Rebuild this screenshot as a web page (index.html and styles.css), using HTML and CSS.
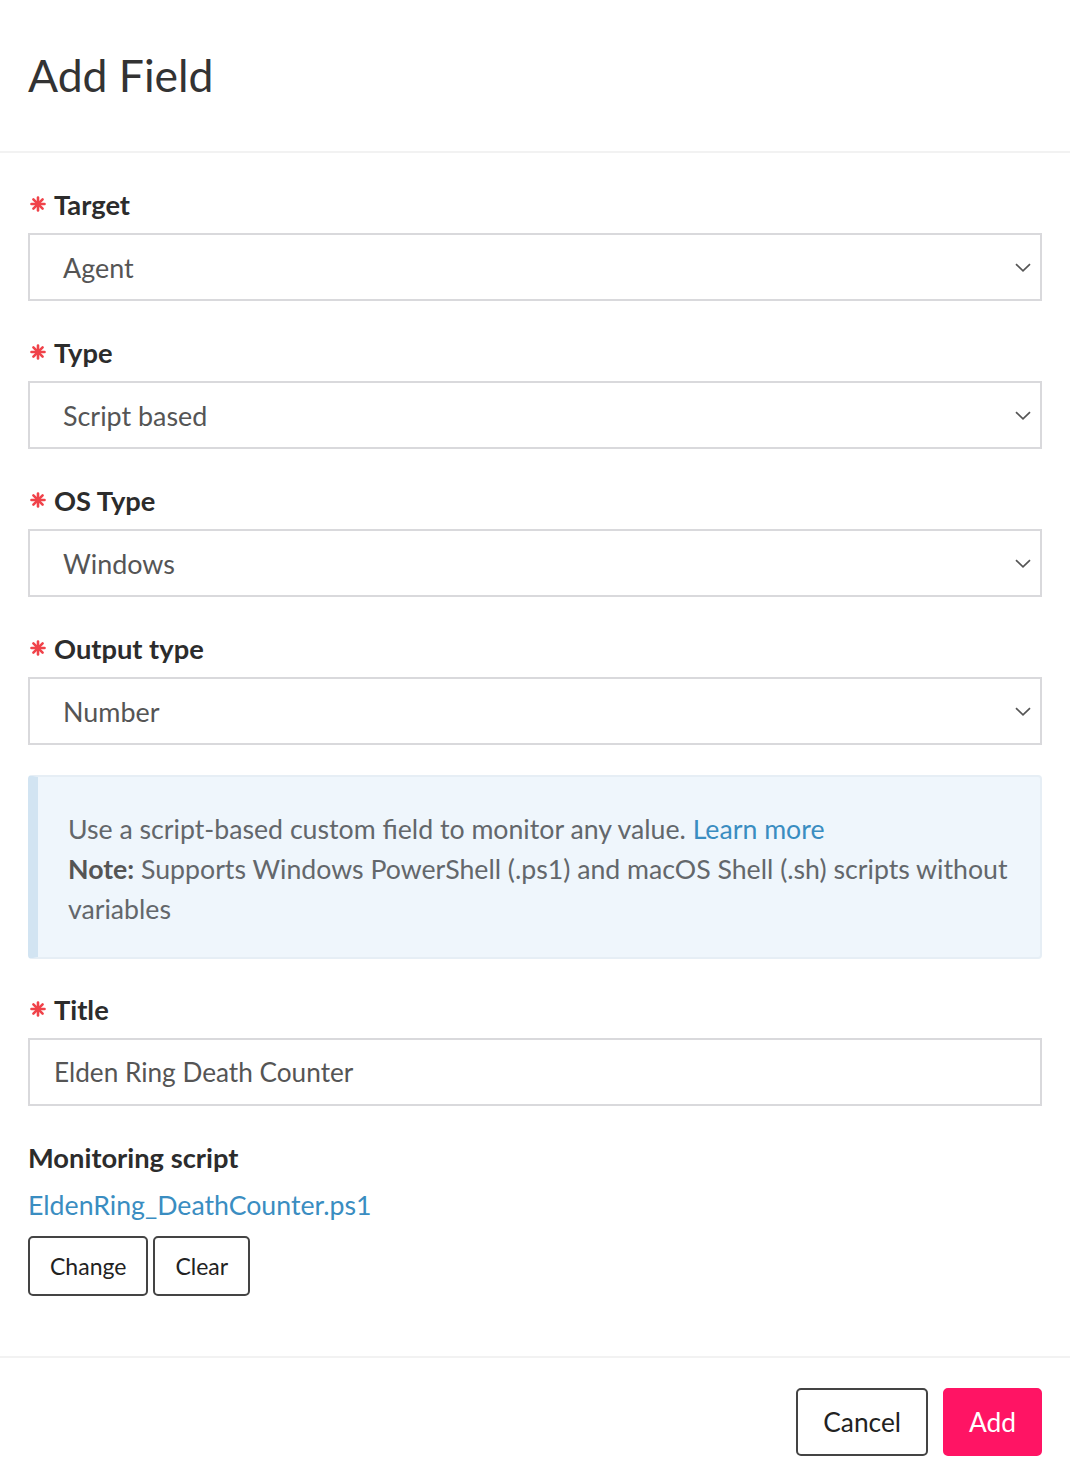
FILE: index.html
```html
<!DOCTYPE html>
<html lang="en">
<head>
<meta charset="utf-8">
<title>Add Field</title>
<link rel="stylesheet" href="styles.css">
</head>
<body>
<div class="modal">
  <header class="modal-header">
    <h1 class="modal-title">Add Field</h1>
  </header>
  <main class="modal-body">
    <div class="field">
      <label class="label"><svg class="req" viewBox="0 0 16 16"><g stroke="#f0434a" stroke-width="2.6" stroke-linecap="round"><line x1="8" y1="1.5" x2="8" y2="14.5"/><line x1="1.5" y1="8" x2="14.5" y2="8"/><line x1="3.4" y1="3.4" x2="12.6" y2="12.6"/><line x1="12.6" y1="3.4" x2="3.4" y2="12.6"/></g></svg>Target</label>
      <div class="select"><span>Agent</span><svg class="chev" viewBox="0 0 16 9"><polyline points="1,1.2 8,7.8 15,1.2" fill="none" stroke="#555" stroke-width="1.7"/></svg></div>
    </div>
    <div class="field">
      <label class="label"><svg class="req" viewBox="0 0 16 16"><g stroke="#f0434a" stroke-width="2.6" stroke-linecap="round"><line x1="8" y1="1.5" x2="8" y2="14.5"/><line x1="1.5" y1="8" x2="14.5" y2="8"/><line x1="3.4" y1="3.4" x2="12.6" y2="12.6"/><line x1="12.6" y1="3.4" x2="3.4" y2="12.6"/></g></svg>Type</label>
      <div class="select"><span>Script based</span><svg class="chev" viewBox="0 0 16 9"><polyline points="1,1.2 8,7.8 15,1.2" fill="none" stroke="#555" stroke-width="1.7"/></svg></div>
    </div>
    <div class="field">
      <label class="label"><svg class="req" viewBox="0 0 16 16"><g stroke="#f0434a" stroke-width="2.6" stroke-linecap="round"><line x1="8" y1="1.5" x2="8" y2="14.5"/><line x1="1.5" y1="8" x2="14.5" y2="8"/><line x1="3.4" y1="3.4" x2="12.6" y2="12.6"/><line x1="12.6" y1="3.4" x2="3.4" y2="12.6"/></g></svg>OS Type</label>
      <div class="select"><span>Windows</span><svg class="chev" viewBox="0 0 16 9"><polyline points="1,1.2 8,7.8 15,1.2" fill="none" stroke="#555" stroke-width="1.7"/></svg></div>
    </div>
    <div class="field">
      <label class="label"><svg class="req" viewBox="0 0 16 16"><g stroke="#f0434a" stroke-width="2.6" stroke-linecap="round"><line x1="8" y1="1.5" x2="8" y2="14.5"/><line x1="1.5" y1="8" x2="14.5" y2="8"/><line x1="3.4" y1="3.4" x2="12.6" y2="12.6"/><line x1="12.6" y1="3.4" x2="3.4" y2="12.6"/></g></svg>Output type</label>
      <div class="select"><span>Number</span><svg class="chev" viewBox="0 0 16 9"><polyline points="1,1.2 8,7.8 15,1.2" fill="none" stroke="#555" stroke-width="1.7"/></svg></div>
    </div>
    <div class="info">
      <p>Use a script-based custom field to monitor any value. <a href="#" class="link">Learn more</a></p>
      <p><strong>Note:</strong> Supports Windows PowerShell (.ps1) and macOS Shell (.sh) scripts without variables</p>
    </div>
    <div class="field">
      <label class="label"><svg class="req" viewBox="0 0 16 16"><g stroke="#f0434a" stroke-width="2.6" stroke-linecap="round"><line x1="8" y1="1.5" x2="8" y2="14.5"/><line x1="1.5" y1="8" x2="14.5" y2="8"/><line x1="3.4" y1="3.4" x2="12.6" y2="12.6"/><line x1="12.6" y1="3.4" x2="3.4" y2="12.6"/></g></svg>Title</label>
      <div class="input">Elden Ring Death Counter</div>
    </div>
    <div class="script">
      <div class="label plain">Monitoring script</div>
      <a href="#" class="link file">EldenRing_DeathCounter.ps1</a>
      <div class="btn-row">
        <button class="btn small">Change</button>
        <button class="btn small">Clear</button>
      </div>
    </div>
  </main>
  <footer class="modal-footer">
    <button class="btn cancel">Cancel</button>
    <button class="btn primary">Add</button>
  </footer>
</div>
</body>
</html>
```

FILE: styles.css
```css
* { box-sizing: border-box; }
html, body { margin: 0; padding: 0; background: #fff; }
body {
  font-family: Lato, "Open Sans", sans-serif;
  color: #333;
  width: 1070px;
}
.modal { width: 1070px; }
.modal-header {
  height: 153px;
  border-bottom: 2px solid #f2f2f2;
  padding: 44px 28px 0;
}
.modal-title {
  margin: 0;
  font-size: 44.5px;
  font-weight: 400;
  line-height: 62px;
  color: #333;
}
.modal-body {
  padding: 34px 28px 60px;
}
.field { margin-bottom: 34px; }
.label {
  display: flex;
  align-items: center;
  height: 34px;
  font-size: 27.3px;
  font-weight: 700;
  color: #2c2c2c;
  margin-bottom: 12px;
}
.req { width: 16px; height: 16px; margin: 0 8px 0 2px; }
.select, .input {
  height: 68px;
  border: 2px solid #d9d9dc;
  display: flex;
  align-items: center;
  color: #555;
}
.select { padding: 0 9px 0 33px; justify-content: space-between; font-size: 26.9px; }
.input { padding: 0 24px; font-size: 26.2px; }
.chev { width: 16px; height: 9px; }
.info {
  margin: -4px 0 33px;
  background: #eff6fc;
  border: 2px solid #e6eef5;
  border-left: 10px solid #d2e4f2;
  border-radius: 4px;
  padding: 32px 28px 28px 30px;
  font-size: 26.7px;
  line-height: 40px;
  color: #63676b;
}
.info p { margin: 0; }
.info strong { color: #555; }
.link { color: #3a8dc1; text-decoration: none; }
.script .label { margin-bottom: 14px; }
.file { display: block; font-size: 26.7px; line-height: 34px; margin-bottom: 14px; }
.btn-row { display: flex; gap: 5px; }
.btn {
  font-family: inherit;
  background: #fff;
  border: 2px solid #444;
  border-radius: 5px;
  color: #222;
  font-size: 26.3px;
  height: 68px;
  padding: 0 24px;
  cursor: pointer;
}
.btn.small { height: 60px; font-size: 23px; padding: 0 20px; }
.modal-footer {
  border-top: 2px solid #f2f2f2;
  padding: 30px 28px;
  display: flex;
  justify-content: flex-end;
  gap: 15px;
}
.btn.cancel { padding: 0 25px; }
.btn.primary {
  background: #ff1464;
  border-color: #ff1464;
  color: #fff;
  padding: 0 24px;
}
```
